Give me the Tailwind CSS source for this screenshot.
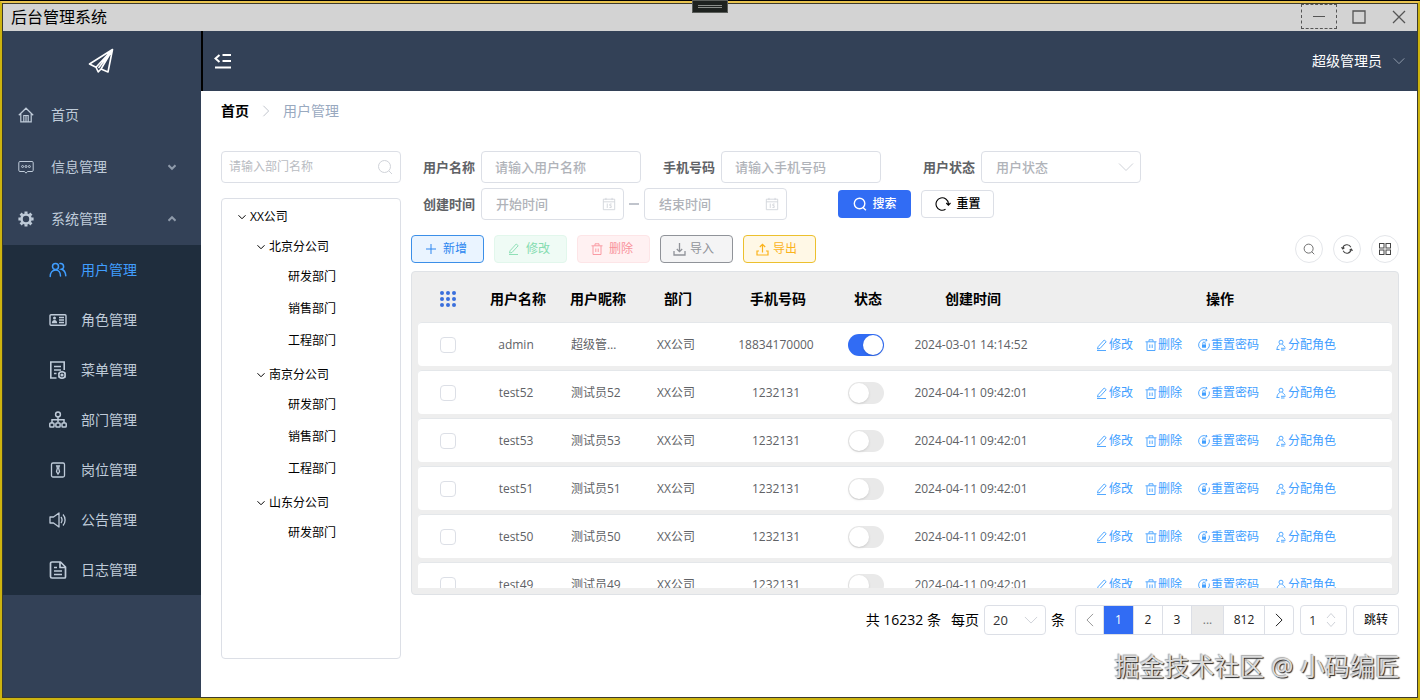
<!DOCTYPE html>
<html lang="zh-CN">

<head>
    <meta charset="UTF-8">
    <meta name="viewport" content="width=device-width, initial-scale=1.0">
    <title>后台管理系统</title>
    <script src="https://cdn.jsdelivr.net/npm/@tailwindcss/browser@4"></script>
</head>

<body class="font-['Open_Sans','Noto_Sans_CJK_SC',sans-serif] text-sm text-black">
    <!-- icon sprite -->
    <svg class="hidden" xmlns="http://www.w3.org/2000/svg">
        <symbol id="plane" viewBox="0 0 26 26" fill="none" stroke="currentColor" stroke-width="1.6" stroke-linejoin="round">
            <path d="M24.5 1.5 1.5 16l6.5 3.2 2.2 4.8 2.8-3 7 3L24.5 1.5ZM24.5 1.5 8 19.2M24.5 1.5 10.5 20M24.5 1.5 13 21" />
        </symbol>
        <symbol id="fold" viewBox="0 0 18 16" fill="none" stroke="currentColor" stroke-width="2">
            <path d="M5.5 2 1.5 5.500l4 3.500M8.500 2H17M8.500 8H17M1 14.500h16" />
        </symbol>
        <symbol id="home" viewBox="0 0 16 16" fill="none" stroke="currentColor" stroke-width="1.2">
            <path d="M.8 8.300 8 1.200l7.200 7.100M2.800 6.800v8h10.400v-8M5.800 14.800V8.500h4.400v6.300M8 8.500v6.300" />
        </symbol>
        <symbol id="message" viewBox="0 0 16 16" fill="none" stroke="currentColor" stroke-width="1">
            <path d="M2 2.500h12a1.200 1.200 0 0 1 1.200 1.200v7.600a1.200 1.200 0 0 1-1.200 1.200H9.500L8 14.200l-1.500-1.700H2a1.200 1.200 0 0 1-1.200-1.200V3.700A1.200 1.200 0 0 1 2 2.500Z" />
            <circle cx="4.600" cy="7.500" r="1" /><circle cx="8" cy="7.500" r="1" /><circle cx="11.400" cy="7.500" r="1" />
        </symbol>
        <symbol id="gear" viewBox="0 0 16 16" fill="none" stroke="currentColor">
            <circle cx="8" cy="8" r="4.500" stroke-width="2.600" />
            <path stroke-width="3" d="M8 .4v2.400M8 13.200v2.400M.4 8h2.400M13.200 8h2.400M2.600 2.600l1.700 1.700M11.700 11.700l1.700 1.700M2.600 13.400l1.700-1.700M11.700 4.300l1.700-1.700" />
        </symbol>
        <symbol id="users" viewBox="0 0 18 16" fill="none" stroke="currentColor" stroke-width="1.500" stroke-linecap="round">
            <circle cx="6.500" cy="4.500" r="3" />
            <path d="M1.200 14.500c0-3.700 2-6.500 5.300-6.500s5 2.800 5 6M11 1.500a3 3 0 0 1 1.500 5.800c2.700.7 4 3.200 4.300 6.500" />
        </symbol>
        <symbol id="idcard" viewBox="0 0 18 14" fill="none" stroke="currentColor" stroke-width="1.400">
            <rect x="1" y="1.700" width="16" height="10.600" rx="1" />
            <path d="M10 4.500h5M10 7h5M10 9.500h5" />
            <circle cx="5.500" cy="5" r="1.500" fill="currentColor" stroke="none" />
            <path fill="currentColor" stroke="none" d="M2.800 10.200c0-2 1-3.300 2.700-3.300s2.700 1.300 2.700 3.300Z" />
        </symbol>
        <symbol id="menudoc" viewBox="0 0 18 18" fill="none" stroke="currentColor" stroke-width="1.600">
            <path d="M7.500 17H1.800V1h13.400v8M5 5.500h7M5 9h7M5 12.500h2.500" />
            <circle cx="13" cy="14" r="3.200" /><circle cx="13" cy="14" r=".8" />
            <path stroke-width="1" d="M13 9.800v1.500M13 16.700v1.300M9 12l1.200.7M15.700 15.500l1.300.8M9 16.200l1.200-.7M15.700 12.500l1.300-.7" />
        </symbol>
        <symbol id="org" viewBox="0 0 18 18" fill="none" stroke="currentColor" stroke-width="1.500">
            <circle cx="9" cy="3.400" r="2.400" />
            <path d="M9 6v5.500M3 12V8.800h12V12" />
            <rect x=".8" y="12" width="4.200" height="4" rx=".8" /><rect x="6.900" y="12" width="4.200" height="4" rx=".8" /><rect x="13" y="12" width="4.200" height="4" rx=".8" />
        </symbol>
        <symbol id="post" viewBox="0 0 18 18" fill="none" stroke="currentColor" stroke-width="1.300">
            <rect x="2.500" y="2" width="13" height="14" rx="1.500" />
            <path d="M7.700 5h2.600l-.7 2 .9 3.700L9 13l-1.500-2.300L8.400 7l-.7-2Z" />
        </symbol>
        <symbol id="speaker" viewBox="0 0 18 16" fill="none" stroke="currentColor" stroke-width="1.300" stroke-linejoin="round">
            <path d="M1 5h3.500l5.500-4v14l-5.500-4H1V5ZM12 5c1.300 1.800 1.300 4.200 0 6M14 2.500c2.800 3 2.800 8 0 11" />
        </symbol>
        <symbol id="log" viewBox="0 0 18 18" fill="none" stroke="currentColor" stroke-width="1.700" stroke-linejoin="round">
            <path d="M3 1h8.500L16.500 6v10a1 1 0 0 1-1 1H3a1.500 1.500 0 0 1-1.500-1.500v-13A1.500 1.500 0 0 1 3 1ZM11 1v5.500h5.500M5 6.500h3M5 10h8M5 13.500h8" />
        </symbol>
        <symbol id="down" viewBox="0 0 16 16" fill="none" stroke="currentColor">
            <path d="m1 4.500 7 7 7-7" vector-effect="non-scaling-stroke" />
        </symbol>
        <symbol id="right" viewBox="0 0 16 16" fill="none" stroke="currentColor">
            <path d="m4.500 1 7 7-7 7" vector-effect="non-scaling-stroke" />
        </symbol>
        <symbol id="left" viewBox="0 0 16 16" fill="none" stroke="currentColor">
            <path d="m11.500 1-7 7 7 7" vector-effect="non-scaling-stroke" />
        </symbol>
        <symbol id="search" viewBox="0 0 16 16" fill="none">
            <g stroke="currentColor"><circle cx="7.500" cy="7.500" r="6" /><path d="m11.800 11.800 3.200 3.200" /></g>
        </symbol>
        <symbol id="search-bold" viewBox="0 0 16 16" fill="none" stroke="currentColor" stroke-width="1.600">
            <circle cx="7.500" cy="7.500" r="6" /><path d="m11.500 12 3.200 3.200" />
        </symbol>
        <symbol id="calendar" viewBox="0 0 16 16" fill="none" stroke="currentColor">
            <path d="M1.500 2.500h13v12h-13zM1.500 5.500h13M4.500 1v2.500M11.500 1v2.500" />
            <path d="M6 7.500v5M11 8H9v2h1.500v2H8.500" />
        </symbol>
        <symbol id="reload" viewBox="0 0 16 16" fill="none" stroke="currentColor" stroke-width="1.100">
            <path d="M10.500 13.300A6.200 6.200 0 1 1 13.400 7.500v1.300M11.300 7l2.100 2.200L15.500 7" />
        </symbol>
        <symbol id="plus" viewBox="0 0 12 12" fill="none" stroke="currentColor">
            <path d="M6 1v10M1 6h10" />
        </symbol>
        <symbol id="edit" viewBox="0 0 12 12" fill="none" stroke="currentColor" stroke-width=".9">
            <path d="M2 7.800 8.200 1l2 1.700L4 9.500l-2.500.5.5-2.200ZM1 11.500h9" />
        </symbol>
        <symbol id="trash" viewBox="0 0 12 12" fill="none" stroke="currentColor" stroke-width=".9">
            <path d="M.5 2.800h11M4 2.500V.8h4v1.700M2 3v8.500h8V3M4.800 5.500v3.500M7.200 5.500v3.500" />
        </symbol>
        <symbol id="import" viewBox="0 0 13 13" fill="none" stroke="currentColor" stroke-width="1.300">
            <path d="M6.500 0v8.500M3.800 6l2.700 2.700L9.200 6M1 8v4h11V8" />
        </symbol>
        <symbol id="export" viewBox="0 0 13 13" fill="none" stroke="currentColor" stroke-width="1.200">
            <path d="M6.500 9.500V1.500M3.800 4l2.700-2.700L9.200 4M3 8H1v4h11V8h-2" />
        </symbol>
        <symbol id="lock" viewBox="0 0 12 12" fill="none" stroke="currentColor" stroke-width=".9">
            <path d="M11.200 4.500A5.400 5.400 0 1 1 8.500 1.200M8.300 0l.7 1.600-1.600.6" />
            <path fill="currentColor" stroke="none" d="M4 5.500h4v3.200H4z" /><path d="M4.800 5.500V4.200a1.200 1.200 0 0 1 2.400 0v1.300" />
        </symbol>
        <symbol id="assign" viewBox="0 0 12 12" fill="none" stroke="currentColor" stroke-width=".9">
            <circle cx="6" cy="3.200" r="2" /><path d="M2 10.500c0-2.300 1-4 2.800-5M7.200 5.500C9 6.500 9.700 7.500 10 8.500M1.500 10.500h3M6 9.300h4.500M9.500 11H6" />
        </symbol>
        <symbol id="sync" viewBox="0 0 14 14" fill="none" stroke="currentColor" stroke-width="1.200">
            <path d="M2 6.500a5 5 0 0 1 9.500-1.500M12 7.500A5 5 0 0 1 2.500 9M.5 5 2 7l2-1.500M13.500 9 12 7l-2 1.500" />
        </symbol>
        <symbol id="grid" viewBox="0 0 14 14" fill="none" stroke="currentColor">
            <rect x="1.500" y="1.500" width="4.500" height="4.500" /><rect x="8" y="1.500" width="4.500" height="4.500" /><rect x="1.500" y="8" width="4.500" height="4.500" /><rect x="8" y="8" width="4.500" height="4.500" />
        </symbol>
    </svg>

    <div class="relative h-screen border-t border-black">
        <div class="h-full border-2 border-[#cdb40f] border-t-[#e9c451]">
            <div class="flex flex-col h-full border border-[#3b3a2c]">
                <!-- title bar -->
                <header class="flex items-center justify-between h-[27px] shrink-0 bg-[#d3d3d3] pl-2">
                    <h1 class="text-base/6 pb-0.5">后台管理系统</h1>
                    <div class="flex h-full text-[#555]">
                        <button aria-label="最小化" class="flex justify-center items-center w-9 h-[25px] border border-dashed border-[#555]">
                            <svg class="size-3.5" viewBox="0 0 14 14" stroke="currentColor"><path d="M1 6.500h12" /></svg>
                        </button>
                        <button aria-label="最大化" class="flex justify-center items-center w-11 h-[25px]">
                            <svg class="size-3.5" viewBox="0 0 14 14" fill="none" stroke="currentColor" stroke-width="1.300"><path d="M1 1h12v12H1z" /></svg>
                        </button>
                        <button aria-label="关闭" class="flex justify-center items-center w-9 h-[25px]">
                            <svg class="size-3.5" viewBox="0 0 14 14" stroke="currentColor" stroke-width="1.300"><path d="m1 1 12 12M13 1 1 13" /></svg>
                        </button>
                    </div>
                </header>

                <div class="flex flex-1 min-h-0">
                    <!-- sidebar -->
                    <nav class="flex flex-col w-[198px] shrink-0 bg-[#334157] text-[#bfcbd9]">
                        <div class="flex justify-center items-center h-[58px] shrink-0 pt-0.5 pr-0.5 text-white">
                            <svg class="size-[26px]"><use href="#plane" /></svg>
                        </div>
                        <a href="#" class="flex items-center h-13 px-[15px]">
                            <svg class="size-4 mr-[17px]"><use href="#home" /></svg>首页
                        </a>
                        <a href="#" class="flex items-center h-13 px-[15px]">
                            <svg class="size-4 mr-[17px]"><use href="#message" /></svg>信息管理
                            <svg class="size-2 ml-auto mr-2.5 stroke-2 text-[#8f9bab]"><use href="#down" /></svg>
                        </a>
                        <a href="#" class="flex items-center h-13 px-[15px]">
                            <svg class="size-4 mr-[17px]"><use href="#gear" /></svg>系统管理
                            <svg class="size-2 ml-auto mr-2.5 stroke-2 rotate-180 text-[#8f9bab]"><use href="#down" /></svg>
                        </a>
                        <div id="submenu" class="bg-[#1f2d3d]"></div>
                    </nav>

                    <div class="flex flex-col flex-1 min-w-0">
                        <div class="flex items-center justify-between h-15 shrink-0 bg-[#334157] border-l-2 border-black pl-[11px] pr-3 text-white">
                            <button aria-label="折叠菜单"><svg class="w-[18px] h-4"><use href="#fold" /></svg></button>
                            <button class="flex items-center gap-[11px]">超级管理员<svg class="size-3 text-[#8f9bab]"><use href="#down" /></svg></button>
                        </div>

                        <main class="flex flex-col flex-1 min-h-0 bg-white pl-5 pr-[18px] pt-2.5 pb-[38px]">
                            <div class="flex items-center h-5 mb-[30px]">
                                <a href="#" class="font-bold">首页</a>
                                <svg class="size-3 mx-[11px] text-[#c0c4cc]"><use href="#right" /></svg>
                                <a href="#" class="text-[#99a9bf]">用户管理</a>
                            </div>

                            <div class="flex flex-1 min-h-0 gap-2.5">
                                <!-- department tree -->
                                <aside class="flex flex-col w-45 shrink-0 gap-[15px]">
                                    <label class="flex items-center h-8 shrink-0 border border-[#dcdfe6] rounded px-[7px]">
                                        <input type="text" aria-label="部门名称" placeholder="请输入部门名称" class="flex-1 min-w-0 text-xs outline-none placeholder:text-[#b9bcc2]">
                                        <svg class="size-4 text-[#d0d3d9]"><use href="#search" /></svg>
                                    </label>
                                    <div id="tree" class="flex-1 min-h-0 border border-[#dcdfe6] rounded pt-1 text-xs"></div>
                                </aside>

                                <section class="flex flex-col flex-1 min-w-0">
                                    <!-- filters -->
                                    <form class="flex flex-col gap-[5px] pl-3 text-[13px]">
                                        <div class="flex items-center">
                                            <label for="name" class="mr-1.5 font-bold text-[#606266]">用户名称</label>
                                            <input id="name" type="text" placeholder="请输入用户名称" class="w-40 h-8 border border-[#dcdfe6] rounded px-[13px] font-medium outline-none placeholder:text-[#b0b3b9]">
                                            <label for="phone" class="ml-[22px] mr-1.5 font-bold text-[#606266]">手机号码</label>
                                            <input id="phone" type="text" placeholder="请输入手机号码" class="w-40 h-8 border border-[#dcdfe6] rounded px-[13px] font-medium outline-none placeholder:text-[#b0b3b9]">
                                            <label for="status" class="ml-[42px] mr-1.5 font-bold text-[#606266]">用户状态</label>
                                            <div class="relative">
                                                <select id="status" class="block w-40 h-8 appearance-none border border-[#dcdfe6] rounded px-3.5 font-medium text-[#b0b3b9] outline-none">
                                                    <option>用户状态</option>
                                                    <option>启用</option>
                                                    <option>停用</option>
                                                </select>
                                                <svg class="absolute right-[7px] top-2 size-4 text-[#d0d3d9] pointer-events-none"><use href="#down" /></svg>
                                            </div>
                                        </div>
                                        <div class="flex items-center">
                                            <label for="start" class="mr-1.5 font-bold text-[#606266]">创建时间</label>
                                            <div class="flex items-center w-[143px] h-8 border border-[#dcdfe6] rounded pl-3.5 pr-[7px]">
                                                <input id="start" type="text" placeholder="开始时间" class="flex-1 min-w-0 font-medium outline-none placeholder:text-[#b0b3b9]">
                                                <svg class="size-3.5 text-[#d0d3d9]"><use href="#calendar" /></svg>
                                            </div>
                                            <span class="w-2.5 h-0.5 mx-[5px] bg-[#c0c4cc]"></span>
                                            <div class="flex items-center w-[143px] h-8 border border-[#dcdfe6] rounded pl-3.5 pr-[7px]">
                                                <input type="text" aria-label="结束时间" placeholder="结束时间" class="flex-1 min-w-0 font-medium outline-none placeholder:text-[#b0b3b9]">
                                                <svg class="size-3.5 text-[#d0d3d9]"><use href="#calendar" /></svg>
                                            </div>
                                            <button type="button" class="flex justify-center items-center gap-1.5 w-[73px] h-7 ml-[51px] rounded bg-[#316cf4] text-xs font-medium text-white">
                                                <svg class="size-3.5"><use href="#search-bold" /></svg>搜索
                                            </button>
                                            <button type="button" class="flex justify-center items-center gap-1.5 w-[73px] h-7 ml-2.5 border border-[#dcdfe6] rounded text-xs font-medium">
                                                <svg class="size-4"><use href="#reload" /></svg>重置
                                            </button>
                                        </div>
                                    </form>

                                    <!-- toolbar -->
                                    <div class="flex gap-2.5 mt-[15px] mb-2 text-xs">
                                        <button class="flex items-center gap-1.5 w-[73px] h-7 pl-[13px] rounded border border-[#3c8fe8] bg-[#eaf4ff] text-[#2c86f0]"><svg class="size-3"><use href="#plus" /></svg>新增</button>
                                        <button class="flex items-center gap-1.5 w-[73px] h-7 pl-[13px] rounded border border-[#e2f7ec] bg-[#effbf5] text-[#85dcb0]"><svg class="size-3"><use href="#edit" /></svg>修改</button>
                                        <button class="flex items-center gap-1.5 w-[73px] h-7 pl-[13px] rounded border border-[#fde5e7] bg-[#fff1f2] text-[#f9919b]"><svg class="size-3"><use href="#trash" /></svg>删除</button>
                                        <button class="flex items-center gap-1 w-[73px] h-7 pl-3 rounded border border-[#909399] bg-[#f4f4f5] text-[#909399]"><svg class="size-[13px]"><use href="#import" /></svg>导入</button>
                                        <button class="flex items-center gap-1 w-[73px] h-7 pl-3 rounded border border-[#ecc02e] bg-[#fff8e6] text-[#fbb31b]"><svg class="size-[13px]"><use href="#export" /></svg>导出</button>
                                        <div class="flex gap-2.5 ml-auto text-[#444]">
                                            <button aria-label="搜索" class="flex justify-center items-center size-7 border border-[#e4e6ea] rounded-full"><svg class="size-3"><use href="#search" /></svg></button>
                                            <button aria-label="刷新" class="flex justify-center items-center size-7 border border-[#e4e6ea] rounded-full"><svg class="size-3"><use href="#sync" /></svg></button>
                                            <button aria-label="列设置" class="flex justify-center items-center size-7 border border-[#e4e6ea] rounded-full"><svg class="size-3.5"><use href="#grid" /></svg></button>
                                        </div>
                                    </div>

                                    <!-- user table -->
                                    <div class="flex-1 min-h-0 border border-[#dfe2e6] rounded bg-[#eee] px-1.5 pb-1.5">
                                        <div class="h-full overflow-hidden">
                                            <table class="w-full table-fixed border-separate border-spacing-x-0 border-spacing-y-1 text-center">
                                                <colgroup>
                                                    <col class="w-15"><col class="w-20"><col class="w-20"><col class="w-20"><col class="w-30"><col class="w-15"><col class="w-[150px]"><col>
                                                </colgroup>
                                                <thead>
                                                    <tr class="h-[42px] text-sm *:pt-1">
                                                        <th>
                                                            <svg class="size-4 mx-auto text-[#3a6fdc]" viewBox="0 0 16 16" fill="currentColor" role="img" aria-label="全选">
                                                                <circle cx="2" cy="2" r="2" /><circle cx="8" cy="2" r="2" /><circle cx="14" cy="2" r="2" />
                                                                <circle cx="2" cy="8" r="2" /><circle cx="8" cy="8" r="2" /><circle cx="14" cy="8" r="2" />
                                                                <circle cx="2" cy="14" r="2" /><circle cx="8" cy="14" r="2" /><circle cx="14" cy="14" r="2" />
                                                            </svg>
                                                        </th>
                                                        <th>用户名称</th>
                                                        <th>用户昵称</th>
                                                        <th>部门</th>
                                                        <th>手机号码</th>
                                                        <th>状态</th>
                                                        <th>创建时间</th>
                                                        <th>操作</th>
                                                    </tr>
                                                </thead>
                                                <tbody id="rows" class="text-xs text-[#606266]"></tbody>
                                            </table>
                                        </div>
                                    </div>

                                    <!-- pagination -->
                                    <div class="flex justify-end items-center mt-2.5 mb-6">
                                        <span class="mr-2.5">共 16232 条</span>
                                        <label for="size" class="mr-[5px]">每页</label>
                                        <div class="relative mr-[5px]">
                                            <select id="size" class="block w-[62px] h-[30px] appearance-none border border-[#dcdfe6] rounded pl-2 text-[13px] text-[#333] outline-none">
                                                <option>20</option>
                                                <option>50</option>
                                            </select>
                                            <svg class="absolute right-2 top-2 size-3.5 text-[#d0d3d9] pointer-events-none"><use href="#down" /></svg>
                                        </div>
                                        <span class="mr-2.5">条</span>
                                        <div class="flex h-[30px] mr-1.5 border border-[#dcdfe6] rounded divide-x divide-[#dcdfe6] overflow-hidden text-xs text-[#222]">
                                            <button aria-label="上一页" class="flex justify-center items-center w-7 text-[#999]"><svg class="size-3.5"><use href="#left" /></svg></button>
                                            <button class="w-[30px] bg-[#316cf4] text-white">1</button>
                                            <button class="w-[29px]">2</button>
                                            <button class="w-[29px]">3</button>
                                            <button class="w-8 bg-[#ebebeb] text-[#777]">...</button>
                                            <button class="w-[41px]">812</button>
                                            <button aria-label="下一页" class="flex justify-center items-center w-7"><svg class="size-3.5"><use href="#right" /></svg></button>
                                        </div>
                                        <div class="flex items-center w-[47px] h-[30px] mr-1.5 border border-[#dcdfe6] rounded pl-2 pr-2.5">
                                            <input type="text" inputmode="numeric" aria-label="页码" value="1" class="flex-1 min-w-0 text-[13px] text-[#333] outline-none">
                                            <svg class="w-2.5 h-4 text-[#d0d3d9]" viewBox="0 0 10 16" fill="none" stroke="currentColor"><path d="m1 6 4-4.500L9 6M1 10l4 4.500L9 10" /></svg>
                                        </div>
                                        <button class="w-[46px] h-[30px] border border-[#dcdfe6] rounded text-xs">跳转</button>
                                    </div>
                                </section>
                            </div>
                        </main>
                    </div>
                </div>
            </div>
        </div>

        <!-- window drag handle -->
        <div class="absolute left-1/2 -top-px -translate-x-1/2 flex flex-col items-center justify-center gap-px w-9 h-[13px] border border-[#5a5d59] bg-[#1e221f]">
            <span class="w-6 h-px bg-[#8a8d89]"></span>
            <span class="w-6 h-px bg-[#8a8d89]"></span>
        </div>
        <p class="absolute right-5 bottom-4 text-[25px]/9 text-[#dcdcdc] [text-shadow:1px_1px_1px_#222,-1px_-1px_1px_#aaa]">掘金技术社区 @ 小码编匠</p>
    </div>

    <script>
        const menus = [
            ["users", "用户管理"],
            ["idcard", "角色管理"],
            ["menudoc", "菜单管理"],
            ["org", "部门管理"],
            ["post", "岗位管理"],
            ["speaker", "公告管理"],
            ["log", "日志管理"],
        ];
        document.getElementById("submenu").innerHTML = menus.map(([icon, text], i) => `
            <a href="#" class="flex items-center h-[50px] pl-[46px] ${i === 0 ? "text-[#409eff]" : ""}">
                <svg class="size-[18px] mr-3.5"><use href="#${icon}" /></svg>${text}
            </a>`).join("");

        const depts = [
            ["北京分公司", ["研发部门", "销售部门", "工程部门"]],
            ["南京分公司", ["研发部门", "销售部门", "工程部门"]],
            ["山东分公司", ["研发部门"]],
        ];
        const arrow = `<svg class="size-2 mr-1"><use href="#down" /></svg>`;
        document.getElementById("tree").innerHTML =
            `<div class="flex items-center h-7 pl-4">${arrow}XX公司</div>` +
            depts.map(([name, children]) => `
            <div class="py-0.5">
                <div class="flex items-center h-7 pl-[35px]">${arrow}${name}</div>
                ${children.map(c => `<div class="flex items-center h-8 pl-[66px]">${c}</div>`).join("")}
            </div>`).join("");

        const users = [
            ["admin", "超级管理员", "18834170000", true, "2024-03-01 14:14:52"],
            ["test52", "测试员52", "1232131", false, "2024-04-11 09:42:01"],
            ["test53", "测试员53", "1232131", false, "2024-04-11 09:42:01"],
            ["test51", "测试员51", "1232131", false, "2024-04-11 09:42:01"],
            ["test50", "测试员50", "1232131", false, "2024-04-11 09:42:01"],
            ["test49", "测试员49", "1232131", false, "2024-04-11 09:42:01"],
        ];
        const action = (icon, text) => `<a href="#" class="flex items-center gap-px"><svg class="size-3"><use href="#${icon}" /></svg>${text}</a>`;
        document.getElementById("rows").innerHTML = users.map(([name, nick, phone, on, time]) => `
            <tr class="h-11 bg-white *:border-t *:border-[#e4e7ea]">
                <td class="rounded-l">
                    <input type="checkbox" aria-label="选择 ${name}" class="block mx-auto size-4 appearance-none border border-[#dcdfe6] rounded-sm bg-white checked:bg-[#316cf4]">
                </td>
                <td class="pr-1">${name}</td>
                <td><div class="w-[52px] ml-[13px] truncate text-left">${nick}</div></td>
                <td class="pr-1">XX公司</td>
                <td class="pr-1">${phone}</td>
                <td class="pr-1">
                    <input type="checkbox" role="switch" aria-label="${name} 状态" ${on ? "checked" : ""}
                        class="block mx-auto w-9 h-[22px] appearance-none rounded-full bg-[#e9e9e9] checked:bg-[#316cf4] before:block before:size-5 before:mt-px before:ml-px before:rounded-full before:bg-white before:shadow checked:before:translate-x-3.5 transition">
                </td>
                <td class="pr-1">${time}</td>
                <td class="pr-2 rounded-r">
                    <div class="flex justify-center gap-4 text-[#409eff]">
                        <div class="flex gap-3">${action("edit", "修改")}${action("trash", "删除")}</div>
                        ${action("lock", "重置密码")}
                        ${action("assign", "分配角色")}
                    </div>
                </td>
            </tr>`).join("");
    </script>
</body>

</html>
